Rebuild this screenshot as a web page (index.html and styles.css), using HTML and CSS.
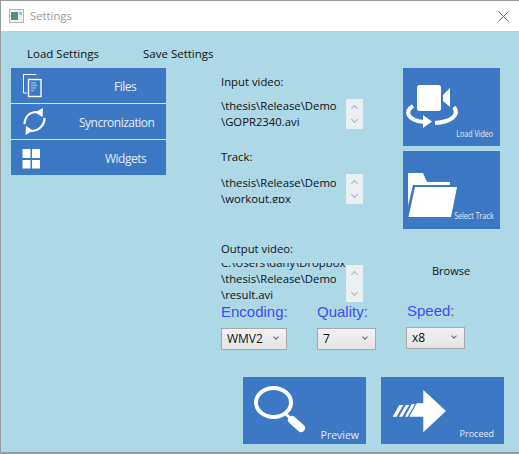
FILE: index.html
```html
<!DOCTYPE html>
<html lang="en">

<head>
  <meta charset="UTF-8">
  <title>Settings</title>
  <link rel="stylesheet" href="styles.css">
</head>

<body>
  <div class="window">
    <div class="titlebar">
      <svg class="app-icon" width="15" height="14" viewBox="0 0 15 14">
        <rect x="0.5" y="0.5" width="14" height="13" fill="#efefef" stroke="#b5b5b5" />
        <rect x="2" y="3" width="7" height="8" fill="#4f8f8a" />
        <rect x="10" y="3" width="3" height="3" fill="#a9c4c8" />
      </svg>
      <span class="title">Settings</span>
      <svg class="close" width="11" height="11" viewBox="0 0 11 11">
        <path d="M0.5 0.5 L10.5 10.5 M10.5 0.5 L0.5 10.5" stroke="#666" fill="none" />
      </svg>
    </div>

    <div class="menu">
      <span>Load Settings</span>
      <span>Save Settings</span>
    </div>

    <div class="content">
      <div class="side">
        <div class="side-item">
          <svg width="26" height="35" viewBox="0 0 26 35">
            <path d="M14 7 V6.5 H1.5 V25 H5" fill="none" stroke="#fff" stroke-width="1" />
            <rect x="6.5" y="11.5" width="12.5" height="17" fill="none" stroke="#fff" stroke-width="1.4" />
            <path d="M9 15 h5 M9 17.5 h6 M9 20 h5 M9 22.5 h3" stroke="#8fb4e2" stroke-width="1.4" />
          </svg>
          <span class="side-files">Files</span>
        </div>
        <div class="side-item">
          <svg width="26" height="35" viewBox="0 0 26 35">
            <path d="M2.5 20 C3 12 8 8 15 8" fill="none" stroke="#fff" stroke-width="2.2" />
            <path d="M13 8.5 L21 4 L20.5 13 Z" fill="#fff" />
            <path d="M22.5 14 C22.5 22 16 27 9 27" fill="none" stroke="#fff" stroke-width="2.2" />
            <path d="M11 26.5 L3.5 31 L4 22 Z" fill="#fff" />
          </svg>
          <span class="side-sync">Syncronization</span>
        </div>
        <div class="side-item">
          <svg width="26" height="35" viewBox="0 0 26 35">
            <rect x="0.5" y="9" width="8" height="9" fill="#fff" />
            <rect x="10" y="9" width="8" height="9" fill="#fff" />
            <rect x="0.5" y="20" width="8" height="8.500" fill="#fff" />
            <rect x="10" y="20" width="8" height="8.500" fill="#fff" />
          </svg>
          <span class="side-widgets">Widgets</span>
        </div>
      </div>

      <div class="form">
        <div class="top-rows">
          <div class="fields">
            <div class="field field-input">
              <div class="label">Input video:</div>
              <div class="path-row">
                <div class="path">\thesis\Release\Demo<br>\GOPR2340.avi</div>
                <div class="spin"><i class="up"></i><i class="down"></i></div>
              </div>
            </div>
            <div class="field field-track">
              <div class="label">Track:</div>
              <div class="path-row">
                <div class="path path-track">\thesis\Release\Demo<br>\workout.gpx</div>
                <div class="spin"><i class="up"></i><i class="down"></i></div>
              </div>
            </div>
          </div>

          <div class="tiles">
            <div class="tile">
              <svg width="97" height="78" viewBox="0 0 97 78">
                <rect x="14" y="17" width="24" height="26" rx="2.5" fill="#fff" />
                <path d="M40 27 L47 20 V39 L40 33 Z" fill="#fff" />
                <path d="M10 38 C2 43 3 52 21 54" fill="none" stroke="#fff" stroke-width="4" />
                <path d="M20 47 L29 53.500 L20 60 Z" fill="#fff" />
                <path d="M32 55 C48 54 57 47 51 39" fill="none" stroke="#fff" stroke-width="4" />
              </svg>
              <span class="tile-text tile-load">Load Video</span>
            </div>
            <div class="tile">
              <svg width="97" height="78" viewBox="0 0 97 78">
                <path d="M5 22 H20 L24 31 H47 V34 H10 L5 55 Z" fill="#fff" />
                <path d="M12 36 H54 L48 66 H5.500 Z" fill="#fff" />
              </svg>
              <span class="tile-text tile-track">Select Track</span>
            </div>
          </div>
        </div>

        <div class="output">
          <div class="label">Output video:</div>
          <div class="path-row">
            <div class="path path-cut">
              <div class="path-scroll">C:\Users\dany\Dropbox<br>\thesis\Release\Demo<br>\result.avi</div>
            </div>
            <div class="spin spin-out"><i class="up"></i><i class="down"></i></div>
            <span class="browse">Browse</span>
          </div>
        </div>

        <div class="options">
          <div class="option opt-enc">
            <div class="opt-label">Encoding:</div>
            <div class="select sel-enc">WMV2</div>
          </div>
          <div class="option opt-quality">
            <div class="opt-label">Quality:</div>
            <div class="select sel-q">7</div>
          </div>
          <div class="option opt-speed">
            <div class="opt-label">Speed:</div>
            <div class="select sel-q">x8</div>
          </div>
        </div>

        <div class="actions">
          <div class="tile tile-wide">
            <svg width="123" height="67" viewBox="0 0 123 67">
              <ellipse cx="30.500" cy="25.500" rx="17.500" ry="14.500" fill="none" stroke="#fff" stroke-width="4" />
              <path d="M42 36 L49 43" stroke="#fff" stroke-width="3" />
              <path d="M49 43 L58 51" stroke="#fff" stroke-width="8" stroke-linecap="round" />
            </svg>
            <span class="tile-text tile-preview">Preview</span>
          </div>
          <div class="tile tile-wide">
            <svg width="123" height="67" viewBox="0 0 123 67">
              <path d="M42.300 13 L65 34 L42.300 55.300 V39.700 H28.300 L35.700 26.300 H42.300 Z" fill="#fff" />
              <path d="M18.300 28 H22.300 L15.700 39.700 H11.700 Z M24.700 28 H28.300 L21.300 39.700 H18 Z M30.700 27 H34 L26.700 39.700 H24 Z" fill="#fff" />
            </svg>
            <span class="tile-text tile-proceed">Proceed</span>
          </div>
        </div>
      </div>
    </div>
  </div>
</body>

</html>
```

FILE: styles.css
```css
html,
body {
  width: 100%;
  height: 100%;
  margin: 0;
  padding: 0;
  overflow: hidden;
}

body {
  background: #9a9a9a;
  font-family: "Open Sans", "Liberation Sans", sans-serif;
  color: #111;
}

.window {
  width: 518px;
  height: 451px;
  margin: 1px 0 0 1px;
  background: #add8e6;
}

.titlebar {
  height: 30px;
  background: #fff;
  display: flex;
  align-items: center;
  padding: 0 10px 0 8px;
}

.app-icon {
  margin-right: 6px;
}

.title {
  flex: 1;
  font-size: 11.3px;
  color: #999;
  padding-bottom: 2px;
}

.menu {
  height: 36px;
  display: flex;
  align-items: center;
  padding: 9px 0 0 26px;
  box-sizing: border-box;
  font-size: 11.5px;
}

.menu span {
  width: 116px;
}

.content {
  display: flex;
  align-items: flex-start;
  padding-left: 10px;
}

.side {
  width: 155px;
  flex: none;
  background: #3d78c5;
  margin-top: 1px;
}

.side-item {
  height: 35px;
  margin-bottom: 1px;
  display: flex;
  align-items: center;
  padding-left: 11px;
  box-shadow: 0 1px 0 #cfe6f2;
  color: #e4ecf7;
  font-size: 12px;
}

.side-item:last-child {
  box-shadow: none;
  margin-bottom: 0;
}

.side-item span {
  flex: 1;
  letter-spacing: -0.5px;
  padding-top: 1px;
}

.side-files {
  padding-left: 66px;
}

.side-sync {
  padding-left: 31px;
}

.side-widgets {
  padding-left: 57px;
}

.form {
  width: 344px;
  margin-left: 55px;
  font-size: 11.3px;
}

.top-rows {
  display: flex;
  height: 174px;
}

.fields {
  width: 182px;
  padding-top: 8px;
}

.field-input {
  height: 75px;
}

.field-input .label {
  height: 23px;
}

.field-input .spin {
  margin-top: 1px;
}

.field-track .label {
  height: 24px;
}

.label {
  line-height: 13px;
}

.path-row {
  display: flex;
}

.path {
  width: 125px;
  height: 36px;
  line-height: 16px;
  overflow: hidden;
  white-space: nowrap;
}

.path-track {
  height: 28px;
  margin-top: 1px;
}

.spin {
  width: 17px;
  height: 30px;
  background: #e9eff2;
  position: relative;
}

.spin i {
  position: absolute;
  left: 6px;
  width: 4px;
  height: 4px;
  border-left: 1px solid #b0b0b0;
  border-top: 1px solid #b0b0b0;
}

.spin .up {
  top: 7px;
  transform: rotate(45deg);
}

.spin .down {
  bottom: 7px;
  transform: rotate(225deg);
}

.tiles {
  display: flex;
  flex-direction: column;
  gap: 5px;
  padding-top: 1px;
}

.tile {
  width: 97px;
  height: 78px;
  background: #3d78c5;
  position: relative;
  color: #e4ecf7;
}

.tile svg {
  display: block;
}

.tile-text {
  position: absolute;
  font-size: 9.500px;
  white-space: nowrap;
  transform: scaleX(0.75);
  transform-origin: right center;
}

.tile-load {
  right: 7px;
  bottom: 6px;
}

.tile-track {
  right: 6px;
  bottom: 7px;
}

.output {
  height: 60px;
}

.output .label {
  height: 22px;
  line-height: 15px;
}

.path-cut {
  height: 40px;
}

.path-scroll {
  margin-top: -8px;
}

.spin-out {
  height: 37px;
  margin-top: 2px;
}

.browse {
  margin-left: 69px;
  line-height: 15px;
  font-size: 11px;
}

.options {
  display: flex;
}

.opt-enc {
  width: 96px;
}

.opt-quality {
  width: 89px;
}

.opt-speed {
  margin-top: -1px;
}

.opt-speed .opt-label {
  padding-left: 1px;
}

.opt-label {
  color: #3f4cf2;
  font-family: "Liberation Sans", sans-serif;
  font-size: 15px;
  height: 27px;
  line-height: 21px;
}

.select {
  height: 22px;
  box-sizing: border-box;
  border: 1px solid #a8a8a8;
  background: linear-gradient(#f2f2f2, #e4e4e4);
  padding-left: 5px;
  line-height: 20px;
  position: relative;
  font-size: 12px;
}

.select::after {
  content: "";
  position: absolute;
  right: 8px;
  top: 6px;
  width: 3px;
  height: 3px;
  border-right: 1px solid #666;
  border-bottom: 1px solid #666;
  transform: rotate(45deg);
}

.sel-enc {
  width: 66px;
}

.sel-q {
  width: 59px;
}

.actions {
  display: flex;
  gap: 15px;
  margin: 27px 0 0 22px;
}

.tile-wide {
  width: 123px;
  height: 67px;
}

.tile-preview {
  right: 7px;
  bottom: 2px;
  font-size: 10.500px;
  transform: none;
}

.tile-proceed {
  right: 10px;
  bottom: 4px;
  font-size: 9px;
  transform: none;
}
```
